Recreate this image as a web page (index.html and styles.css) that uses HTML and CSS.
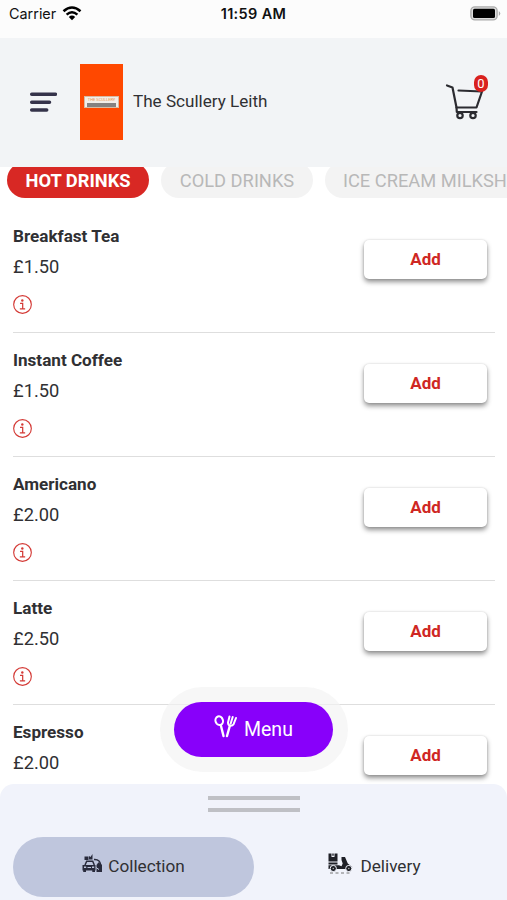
FILE: index.html
```html
<!DOCTYPE html>
<html lang="en">
<head>
<meta charset="utf-8">
<title>The Scullery Leith</title>
<link rel="stylesheet" href="styles.css">
</head>
<body>
<svg class="defs" width="0" height="0" aria-hidden="true">
  <symbol id="info" viewBox="0 0 20 20">
    <circle cx="10" cy="10" r="9.3" fill="none" stroke="currentColor" stroke-width="1.2"/>
    <circle cx="9.8" cy="5.700" r="1.300" fill="currentColor"/>
    <path d="M7.400 8.800h2.800v5.700M7.200 14.700h5.600" fill="none" stroke="currentColor" stroke-width="1.3"/>
  </symbol>
</svg>
<div class="app">
  <div class="status">
    <div class="carrier"><span>Carrier</span>
      <svg width="20" height="15" viewBox="0 0 20 15"><g fill="none" stroke="#000" stroke-width="2.5"><path d="M1.5 5.3Q10-2.3 18.5 5.3"/><path d="M4.6 8.6Q10 3.8 15.4 8.6"/></g><path d="M6.8 10.9Q10 8.2 13.2 10.9L10 14.2Z"/></svg>
    </div>
    <div class="clock">11:59 AM</div>
    <svg class="battery" width="31" height="15" viewBox="0 0 31 15"><rect x=".9" y=".9" width="26.2" height="13" rx="4" fill="#ddd" stroke="#aaa" stroke-width="1.4"/><rect x="3" y="2.8" width="22" height="9.2" rx="1.5"/><path d="M28.8 5v5q3-2.5 0-5" fill="#aaa"/></svg>
  </div>
  <header class="header">
    <svg class="burger" width="28" height="20" viewBox="0 0 28 20"><path d="M2.700 2.200h23.800M2.700 10.200h17.800M2.700 18h15" stroke="#35334a" stroke-width="3.5" stroke-linecap="round"/></svg>
    <div class="logo"><div class="shop"><span>THE SCULLERY</span><i></i></div></div>
    <h1>The Scullery Leith</h1>
    <div class="cart">
      <svg width="40" height="38" viewBox="0 0 40 38"><g fill="none" stroke="#2b2b30" stroke-width="2.200" stroke-linecap="round" stroke-linejoin="round"><path d="M2 1.500l5.500 2 4 20h20l5.500-16L13.500 6.500"/><path d="M11.500 23.500l.3 4.500H31.500"/><circle cx="15" cy="31.500" r="2.700"/><circle cx="28" cy="31.500" r="2.700"/></g></svg>
      <span class="badge">0</span>
    </div>
  </header>
  <nav class="tabs">
    <span class="tab active">HOT DRINKS</span><span class="tab cold">COLD DRINKS</span><span class="tab ice">ICE CREAM MILKSHAKES</span>
  </nav>
  <main class="list">
    <section class="item"><div><h2>Breakfast Tea</h2><p>£1.50</p><svg class="info"><use href="#info"/></svg></div><button>Add</button></section>
    <section class="item"><div><h2>Instant Coffee</h2><p>£1.50</p><svg class="info"><use href="#info"/></svg></div><button>Add</button></section>
    <section class="item"><div><h2>Americano</h2><p>£2.00</p><svg class="info"><use href="#info"/></svg></div><button>Add</button></section>
    <section class="item"><div><h2>Latte</h2><p>£2.50</p><svg class="info"><use href="#info"/></svg></div><button>Add</button></section>
    <section class="item"><div><h2>Espresso</h2><p>£2.00</p><svg class="info"><use href="#info"/></svg></div><button>Add</button></section>
  </main>
  <div class="menu-halo"><div class="menu">
    <svg width="24" height="24" viewBox="0 0 24 24"><g fill="none" stroke="#fff" stroke-width="2" stroke-linecap="round" stroke-linejoin="round"><ellipse cx="5.300" cy="5.800" rx="3.700" ry="4.400" transform="rotate(-18 5 6)"/><path stroke-width="2.400" d="M7 11L9.500 21M15.800 11L13 21"/><path d="M15.500 1.500l-1.500 6q0 2.500 2 3.200 2.500.3 3.600-1.500L22 3M18.700 2l-2 6.500"/></g></svg>
    <span>Menu</span>
  </div></div>
  <footer class="sheet">
    <div class="grip"></div>
    <div class="modes">
      <div class="mode selected">
        <svg width="21" height="19" viewBox="0 0 21 19" fill="#292b3c"><path d="M2.500 2.500h4v3.500h-4zM7 2l1.500 1L10.500 0v5.500H7z"/><path d="M3 11L4.700 7.300h6L12.300 11" fill="none" stroke="#292b3c" stroke-width="1.500"/><path d="M.5 11h13v5.500H13V18h-2.700v-1.500H4V18H1.200v-1.500H.5z"/><path d="M2 12.500h2.200V14H2zM10 12.500h2.200V14H10zM5.500 13h3.500v1H5.500z" fill="#bfc6dd"/><path d="M12 5.500q6-.5 7 6" fill="none" stroke="#292b3c" stroke-width="1.400"/><path d="M14.500 11l2-2.700L20 11v7h-5.500z"/><path d="M14 13.500l3 2" stroke="#bfc6dd"/></svg>
        <span>Collection</span>
      </div>
      <div class="mode delivery">
        <svg width="25" height="21" viewBox="0 0 25 21" fill="#1e1f26"><path d="M.5.5h3v3.500h3V.5h3v8h-9zM4.300.5h1.400v2.300H4.300zM.5 9.500h9v2h-9zM.5 12.300h10.500l2.500 1 1.200-2.800L13.500 7V4H17l2.800 6.500 4.500 3.500-1 1.500q-3-2.500-5 .5H.5z"/><g stroke="#f1f3fb"><circle cx="5.300" cy="15.500" r="3.100"/><circle cx="20.800" cy="15.500" r="3.100"/></g><circle cx="5.300" cy="15.500" r=".8" fill="#aaa"/><circle cx="20.800" cy="15.500" r=".8" fill="#aaa"/><path d="M2 20h22" stroke="#777" stroke-dasharray="3 2.500" fill="none"/></svg>
        <span>Delivery</span>
      </div>
    </div>
  </footer>
</div>
</body>
</html>
```

FILE: styles.css
```css
* { box-sizing: border-box; margin: 0; padding: 0; }
body { font-family: Roboto, "Liberation Sans", sans-serif; color: #303033; background: #fff; }
svg { display: block; flex: none; }
.defs { position: absolute; }
.app { position: relative; width: 507px; height: 900px; overflow: hidden; display: flex; flex-direction: column; }
.status { flex: none; height: 38px; background: #fcfcfc; display: grid; grid-template-columns: 1fr auto 1fr; align-items: start; padding: 6px 6px 0 9px; color: #111; }
.carrier { display: flex; gap: 6px; font: 14.4px/16px Inter, sans-serif; }
.carrier span { width: 47px; white-space: nowrap; }
.clock { font: 600 14.5px/16px Inter, sans-serif; letter-spacing: .35px; margin-right: 3px; }
.battery { justify-self: end; }
.header { flex: none; height: 129px; background: #f2f4f6; display: flex; align-items: center; padding: 0 14px 2px 29px; }
.logo { width: 43px; height: 76px; margin-left: 23px; background: #ff4800; display: flex; align-items: center; justify-content: center; }
.shop { width: 35px; height: 12px; background: #f2eee8; border: 1px solid #d7bba2; display: flex; flex-direction: column; align-items: center; }
.shop span { font-size: 4px; line-height: 6px; color: #e9944c; white-space: nowrap; }
.shop i { width: 29px; height: 4px; background: #858280; }
.header h1 { font-size: 17.1px; font-weight: 400; line-height: 22px; margin-left: 10px; margin-top: -1px; }
.cart { position: relative; margin-left: auto; width: 48px; height: 52px; padding-top: 8px; }
.badge { position: absolute; top: -1px; left: 29px; width: 14px; height: 17px; border-radius: 7px; background: #d9211e; color: #fff; font-size: 13px; line-height: 17px; text-align: center; }
.tabs { flex: none; height: 41px; overflow: hidden; display: flex; gap: 12px; padding-left: 7px; }
.tab { flex: none; height: 36px; margin-top: -5px; border-radius: 18px; background: #f3f3f3; color: #b8b8b8; font-size: 18.300px; line-height: 37px; text-align: center; white-space: nowrap; }
.active { width: 142px; background: #d82824; color: #fff; font-weight: 700; }
.cold { width: 152px; }
.ice { padding: 0 18px; }
.list { flex: none; height: 576px; overflow: hidden; padding: 1px 12px 0 13px; }
.item { height: 124px; border-bottom: 1px solid #dedede; display: flex; justify-content: space-between; padding: 16px 8px 0 0; }
.item h2 { font-size: 17.1px; line-height: 22px; font-weight: 700; }
.item p { font-size: 18.300px; line-height: 22px; margin-top: 9px; }
.info { width: 19px; height: 19px; margin-top: 17px; color: #d43a36; }
.item button { width: 123px; height: 39px; margin-top: 15px; padding-bottom: 2px; border: 0; border-radius: 5px; background: #fff; box-shadow: 0 3px 5px rgba(0,0,0,.43), 0 0 2px rgba(0,0,0,.15); color: #cf2723; font: 700 17px/36px Roboto, sans-serif; }
.menu-halo { position: absolute; left: 160px; top: 687px; width: 188px; height: 85px; padding: 15px 15px 15px 14px; border-radius: 43px; background: rgba(242,242,242,.65); }
.menu { height: 55px; border-radius: 28px; background: #8800fa; display: flex; gap: 6px; padding: 13px 0 0 40px; color: #fff; font-size: 19.500px; line-height: 29px; }
.sheet { height: 116px; flex: none; background: #f1f3fb; border-radius: 14px 14px 0 0; padding: 12px 12px 0 13px; }
.grip { width: 92px; height: 16px; margin: 0 auto 0 195px; border: solid #bfc0c5; border-width: 4px 0; }
.modes { display: flex; margin-top: 25px; }
.mode { height: 60px; width: 241px; padding-bottom: 2px; border-radius: 30px; display: flex; align-items: center; justify-content: center; gap: 5px; font-size: 17.200px; }
.selected { background: #bfc6dd; }
.mode svg { margin-top: -5px; }
.delivery { gap: 7px; }
```
